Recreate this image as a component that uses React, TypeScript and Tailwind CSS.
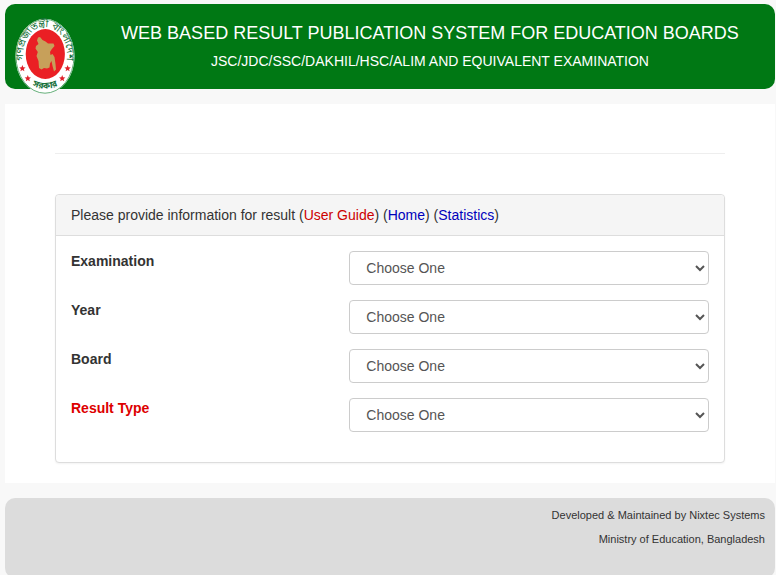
import type React from "react"

interface ResultField {
  id: string
  label: string
  highlight?: boolean
}

const fields: ResultField[] = [
  { id: "exam", label: "Examination" },
  { id: "year", label: "Year" },
  { id: "board", label: "Board" },
  { id: "result-type", label: "Result Type", highlight: true },
]

const stars = [
  { x: 7.4, y: 50.5 },
  { x: 12.8, y: 60.4 },
  { x: 52.6, y: 50.5 },
  { x: 47.2, y: 60.4 },
]

const GovernmentSeal: React.FC = () => (
  <svg
    viewBox="0 0 60 76"
    className="w-[60px] h-[76px]"
    role="img"
    aria-label="Government of Bangladesh"
  >
    <defs>
      <path id="seal-top" d="M9.5 48 A22 28.5 0 1 1 50.5 48" />
      <path id="seal-bottom" d="M12 64.5 Q30 77 48 64.5" />
    </defs>
    <ellipse cx="30" cy="38.3" rx="29.6" ry="37.5" fill="#ffffff" />
    <ellipse cx="30" cy="38.3" rx="29" ry="36.9" fill="none" stroke="#3f9a58" strokeWidth="0.8" />
    <ellipse cx="30.3" cy="36" rx="19.6" ry="25" fill="#ea1f24" />
    <path
      d="M23 19.5 L25 19 L27.5 22 L30.5 23.5 L33 25.5 L38.5 25.5 L39.5 28 L36.5 31.5 L35 34 L35.5 37 L37.5 36 L39.5 39 L40.5 46 L41 51.5 L39 53.5 L37.5 48 L36.5 43 L35 45.5 L34.5 49.5 L32 50.5 L29 50 L26.5 51.5 L24 50 L23.5 43 L21.5 38 L22.8 34 L20.5 30.5 L21 28 L23.5 26 L22 22.5 Z"
      fill="#c7a05a"
    />
    {stars.map((star) => (
      <path
        key={`${star.x}-${star.y}`}
        transform={`translate(${star.x} ${star.y})`}
        d="M0 -3.4 L0.9 -1.2 L3.2 -1 L1.4 0.5 L2 2.8 L0 1.5 L-2 2.8 L-1.4 0.5 L-3.2 -1 L-0.9 -1.2 Z"
        fill="#e0202a"
      />
    ))}
    <g fill="#16703a" className="font-['Noto_Sans_Bengali','Noto_Sans',sans-serif]">
      <text fontSize="10" textAnchor="middle">
        <textPath href="#seal-top" startOffset="50%">
          গণপ্রজাতন্ত্রী বাংলাদেশ
        </textPath>
      </text>
      <text fontSize="9" textAnchor="middle" className="font-bold">
        <textPath href="#seal-bottom" startOffset="50%">
          সরকার
        </textPath>
      </text>
    </g>
  </svg>
)

const Header: React.FC = () => (
  <header className="flex items-start rounded-[10px] bg-[#007814] h-[85px] pl-[10px] text-white">
    <div className="shrink-0 pt-[14px]">
      <GovernmentSeal />
    </div>
    <div className="flex-1 pt-[19px] pl-[10px] text-center">
      <h1 className="text-[18px] leading-[20px]">
        WEB BASED RESULT PUBLICATION SYSTEM FOR EDUCATION BOARDS
      </h1>
      <p className="mt-2 text-[14px] leading-[20px]">
        JSC/JDC/SSC/DAKHIL/HSC/ALIM AND EQUIVALENT EXAMINATION
      </p>
    </div>
  </header>
)

const ResultForm: React.FC = () => (
  <section className="rounded border border-[#dddddd] bg-white shadow-xs">
    <div className="rounded-t border-b border-[#dddddd] bg-[#f5f5f5] px-[15px] py-[10px]">
      Please provide information for result (
      <a href="#guide" className="text-[#cc0000]">User Guide</a>) (
      <a href="#home" className="text-[#0000bb]">Home</a>) (
      <a href="#statistics" className="text-[#0000bb]">Statistics</a>)
    </div>
    <form className="flex flex-col gap-[15px] pt-[15px] pb-[30px]">
      {fields.map((field) => (
        <div key={field.id} className="grid grid-cols-12">
          <label
            htmlFor={field.id}
            className={`col-span-5 px-[15px] font-bold ${field.highlight ? "text-[#dd0000]" : ""}`}
          >
            {field.label}
          </label>
          <div className="col-span-7 px-[15px]">
            <select
              id={field.id}
              className="block w-full h-[34px] rounded border border-[#cccccc] bg-white px-3 text-[14px] text-[#555555]"
            >
              <option>Choose One</option>
            </select>
          </div>
        </div>
      ))}
    </form>
  </section>
)

const Footer: React.FC = () => (
  <footer className="flex flex-col gap-1 rounded-[10px] bg-[#dcdcdc] h-[80px] px-[10px] pt-[7px] text-right text-[11px] leading-[20px]">
    <p>Developed &amp; Maintained by Nixtec Systems</p>
    <p>Ministry of Education, Bangladesh</p>
  </footer>
)

const App: React.FC = () => {
  return (
    <div className="h-screen overflow-hidden bg-[#f8f8f8] pt-1 pl-[5px] pr-px font-['Liberation_Sans',Arial,sans-serif] text-[14px] leading-[20px] text-[#333333]">
      <Header />
      <main className="my-[15px] bg-white px-[50px] pt-[49px] pb-[20px]">
        <hr className="mb-[40px] border-[#eeeeee]" />
        <ResultForm />
      </main>
      <Footer />
    </div>
  )
}

export default App
